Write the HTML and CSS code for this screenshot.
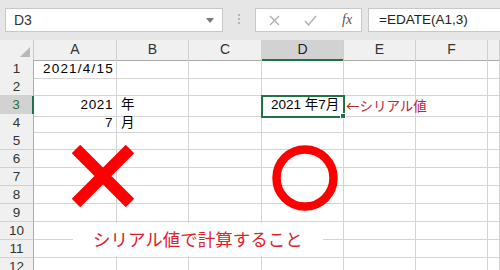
FILE: index.html
```html
<!DOCTYPE html>
<html lang="ja">
  <head>
    <meta charset="UTF-8" />
    <title>EDATE</title>
    <link rel="stylesheet" href="styles.css">
  </head>
  <body>
    <div class="toolbar">
      <div class="namebox">
        <span>D3</span>
        <svg class="drop" width="8" height="5" viewBox="0 0 8 5"><path d="M0 0H8L4 5Z" fill="#7a7a7a"/></svg>
      </div>
      <div class="grip"><i></i><i></i><i></i></div>
      <div class="fxbtns">
        <svg width="11" height="11" viewBox="0 0 11 11"><path d="M1 1L10 10M10 1L1 10" stroke="#b0b0b0" stroke-width="1.3" fill="none"/></svg>
        <svg width="13" height="11" viewBox="0 0 13 11"><path d="M1 6L4.5 10L12 1" stroke="#b0b0b0" stroke-width="1.4" fill="none"/></svg>
        <span class="fx">fx</span>
      </div>
      <div class="formula">=EDATE(A1,3)</div>
    </div>

    <div class="sheet">
      <div class="row head">
        <div class="corner"><svg width="10" height="10" viewBox="0 0 10 10"><path d="M10 0V10H0Z" fill="#b8b8b8"/></svg></div>
        <div class="ch">A</div><div class="ch">B</div><div class="ch">C</div>
        <div class="ch sel">D</div><div class="ch">E</div><div class="ch">F</div><div class="ch"></div>
      </div>
      <div class="row">
        <div class="rh">1</div>
        <div class="c date">2021/4/15</div><div class="c"></div><div class="c"></div>
        <div class="c"></div><div class="c"></div><div class="c"></div><div class="c"></div>
      </div>
      <div class="row">
        <div class="rh">2</div>
        <div class="c"></div><div class="c"></div><div class="c"></div>
        <div class="c"></div><div class="c"></div><div class="c"></div><div class="c"></div>
      </div>
      <div class="row">
        <div class="rh sel">3</div>
        <div class="c num">2021</div><div class="c">年</div><div class="c"></div>
        <div class="c active">2021 年7月<span class="handle"></span></div>
        <div class="c"><span class="note">←シリアル値</span></div><div class="c"></div><div class="c"></div>
      </div>
      <div class="row">
        <div class="rh">4</div>
        <div class="c num">7</div><div class="c">月</div><div class="c"></div>
        <div class="c"></div><div class="c"></div><div class="c"></div><div class="c"></div>
      </div>
      <div class="row">
        <div class="rh">5</div>
        <div class="c"></div><div class="c"></div><div class="c"></div>
        <div class="c"></div><div class="c"></div><div class="c"></div><div class="c"></div>
      </div>
      <div class="row">
        <div class="rh">6</div>
        <div class="c"></div><div class="c"></div><div class="c"></div>
        <div class="c"></div><div class="c"></div><div class="c"></div><div class="c"></div>
      </div>
      <div class="row">
        <div class="rh">7</div>
        <div class="c"></div><div class="c"></div><div class="c"></div>
        <div class="c"></div><div class="c"></div><div class="c"></div><div class="c"></div>
      </div>
      <div class="row">
        <div class="rh">8</div>
        <div class="c"></div><div class="c"></div><div class="c"></div>
        <div class="c"></div><div class="c"></div><div class="c"></div><div class="c"></div>
      </div>
      <div class="row">
        <div class="rh">9</div>
        <div class="c"></div><div class="c"></div><div class="c"></div>
        <div class="c"></div><div class="c"></div><div class="c"></div><div class="c"></div>
      </div>
      <div class="row">
        <div class="rh">10</div>
        <div class="c"></div><div class="c"></div><div class="c"></div>
        <div class="c"></div><div class="c"></div><div class="c"></div><div class="c"></div>
      </div>
      <div class="row">
        <div class="rh">11</div>
        <div class="c"></div><div class="c"></div><div class="c"></div>
        <div class="c"></div><div class="c"></div><div class="c"></div><div class="c"></div>
      </div>
      <div class="row">
        <div class="rh">12</div>
        <div class="c"></div><div class="c"></div><div class="c"></div>
        <div class="c"></div><div class="c"></div><div class="c"></div><div class="c"></div>
      </div>

      <!-- shapes drawn over the grid -->
      <svg class="mark cross" width="64" height="62" viewBox="0 0 64 62">
        <path d="M5 4L59 58M59 4L5 58" stroke="#ff0000" stroke-width="12" fill="none"/>
      </svg>
      <svg class="mark ring" width="68" height="68" viewBox="0 0 68 68">
        <circle cx="34" cy="34" r="28.5" stroke="#ff0000" stroke-width="8.5" fill="none"/>
      </svg>
      <div class="callout">シリアル値で計算すること</div>
    </div>
  </body>
</html>
```

FILE: styles.css
```css
* {
  margin: 0;
  box-sizing: border-box;
}
body {
  width: 500px;
  height: 270px;
  overflow: hidden;
  font-family: "Liberation Sans", "Noto Sans CJK JP", sans-serif;
  color: #000;
  background: #fff;
}

/* formula bar */
.toolbar {
  display: flex;
  align-items: flex-start;
  height: 40px;
  padding: 8px 0 0 5px;
  background: #e6e6e6;
}
.namebox {
  display: flex;
  align-items: center;
  justify-content: space-between;
  width: 218px;
  height: 24px;
  padding: 0 8px 0 8px;
  background: #fff;
  border: 1px solid #c8c8c8;
  font-size: 14px;
  color: #333;
}
.drop {
  margin-top: 1px;
}
.grip {
  display: flex;
  flex-direction: column;
  gap: 2px;
  width: 3px;
  margin: 6px 14px 0 15px;
}
.grip i {
  display: block;
  width: 2px;
  height: 2px;
  background: #b4b4b4;
}
.fxbtns {
  display: flex;
  align-items: center;
  width: 107px;
  height: 24px;
  padding-left: 13px;
  gap: 24px;
  background: #fff;
  border: 1px solid #c8c8c8;
}
.fx {
  margin-left: 1px;
  font-family: "Liberation Serif", serif;
  font-style: italic;
  font-size: 14px;
  color: #555;
}
.formula {
  flex: 1;
  height: 24px;
  margin-left: 6px;
  padding: 3px 0 0 10px;
  background: #fff;
  border: 1px solid #c8c8c8;
  border-right: none;
  font-size: 13.5px;
  color: #222;
}

/* grid */
.sheet {
  position: relative;
}
.row {
  display: grid;
  grid-template-columns: 34px 83px 72px 73px 82px 72px 72px 1fr;
  height: 18px;
}
.row.head {
  height: 20px;
  background: #f0f0f0;
}
.corner {
  display: flex;
  align-items: flex-end;
  justify-content: flex-end;
  padding: 0 3px 3px 0;
  border-right: 1px solid #c8c8c8;
  border-bottom: 1px solid #ababab;
}
.ch {
  text-align: center;
  font-size: 14px;
  line-height: 19px;
  color: #333;
  border-right: 1px solid #d0d0d0;
  border-bottom: 1px solid #ababab;
}
.ch.sel {
  background: #d2d2d2;
  color: #222;
  border-bottom: 2px solid #217346;
}
.rh {
  text-align: center;
  font-size: 13.5px;
  line-height: 17px;
  color: #333;
  background: #f0f0f0;
  border-right: 1px solid #ababab;
  border-bottom: 1px solid #d0d0d0;
}
.rh.sel {
  background: #d2d2d2;
  color: #217346;
  border-right: 2px solid #217346;
}
.c {
  position: relative;
  padding: 0 3px 0 4px;
  font-size: 13.5px;
  line-height: 18px;
  letter-spacing: 0.6px;
  white-space: nowrap;
  border-right: 1px solid #d4d4d4;
  border-bottom: 1px solid #d4d4d4;
}
.c.date {
  padding-left: 9px;
  letter-spacing: 1.2px;
}
.c.num {
  text-align: right;
}
.c.active {
  padding-left: 9px;
  letter-spacing: 0;
  outline: 2px solid #217346;
  outline-offset: -1px;
  z-index: 2;
}
.handle {
  position: absolute;
  right: -3px;
  bottom: -3px;
  width: 6px;
  height: 6px;
  background: #217346;
  border: 1px solid #fff;
}
.note {
  margin-left: -2px;
  color: #c0262d;
  font-family: "Noto Sans CJK JP", sans-serif;
  font-size: 13.5px;
  letter-spacing: 0;
}

/* overlays */
.mark {
  position: absolute;
}
.cross {
  left: 71px;
  top: 105px;
}
.ring {
  left: 271px;
  top: 104px;
}
.callout {
  position: absolute;
  left: 73px;
  top: 183px;
  width: 250px;
  height: 33px;
  padding: 5px 0 0 20px;
  background: #fff;
  color: #e0202a;
  font-family: "Noto Sans CJK JP", sans-serif;
  font-size: 17.5px;
  line-height: 22px;
  white-space: nowrap;
}
```
